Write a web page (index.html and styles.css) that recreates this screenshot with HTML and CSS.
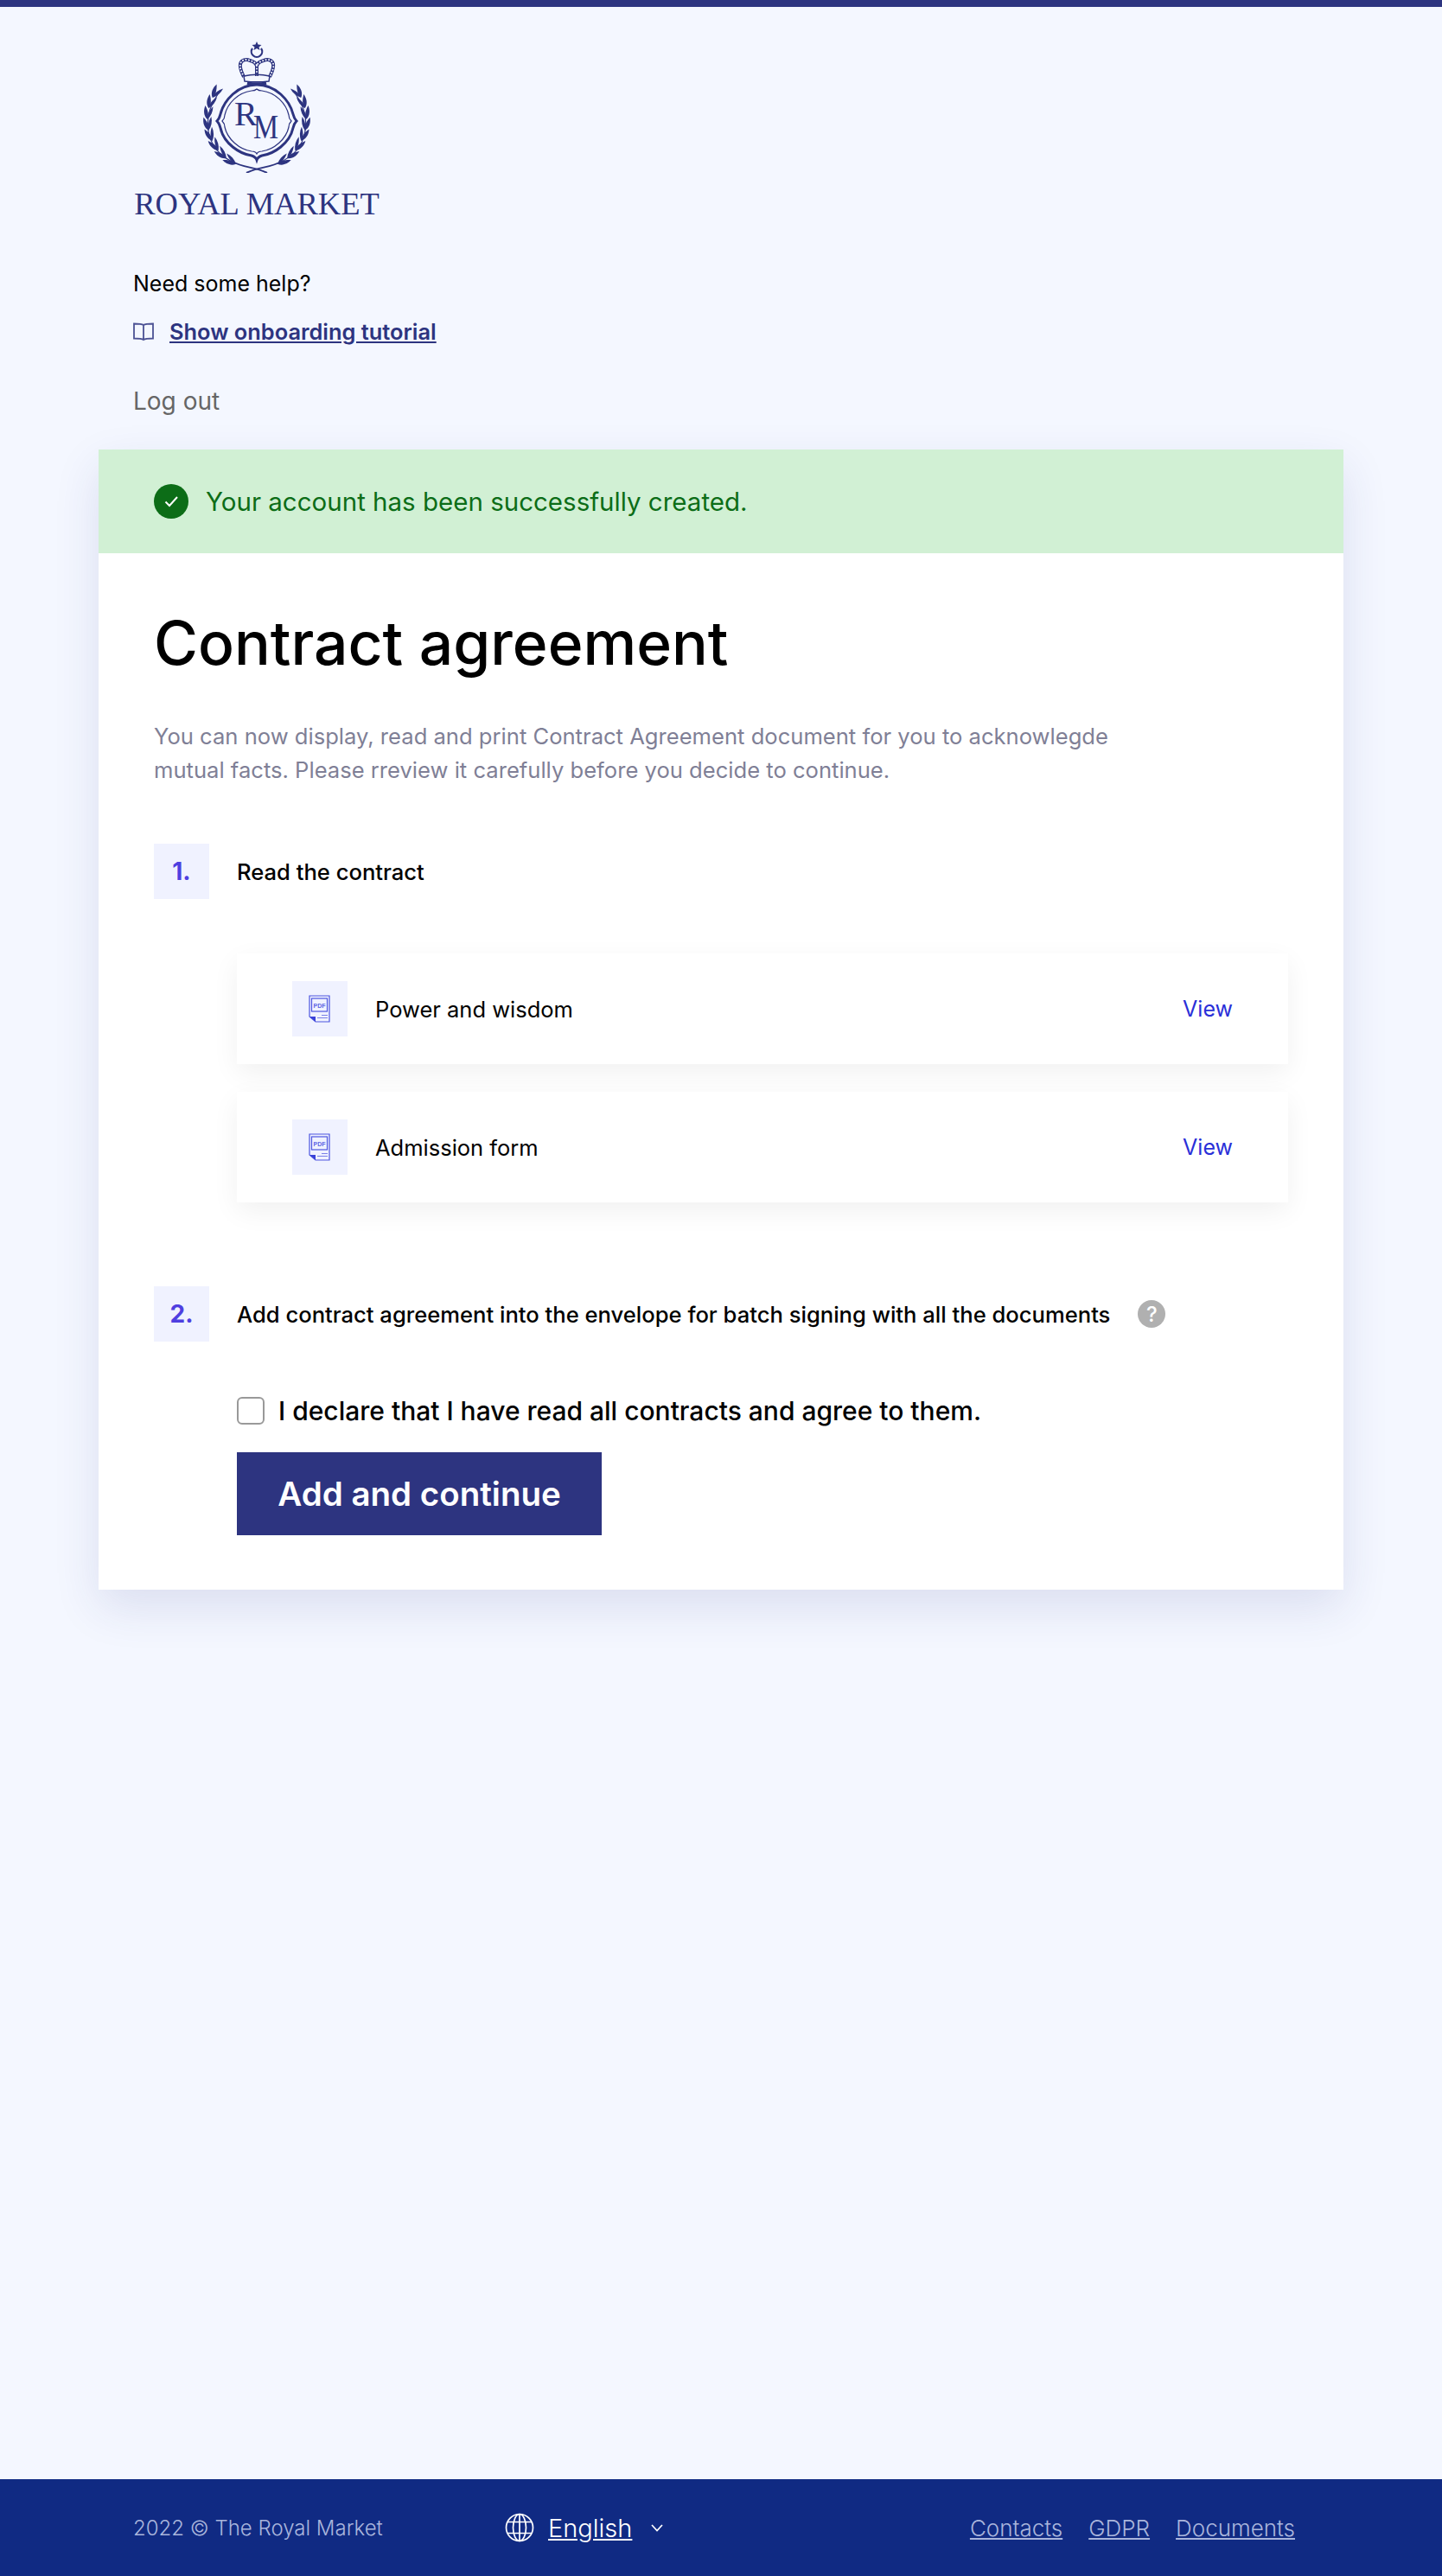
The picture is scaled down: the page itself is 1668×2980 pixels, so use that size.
FILE: index.html
```html
<!DOCTYPE html>
<html lang="en">
<head>
    <meta charset="UTF-8">
    <title>Contract agreement - The Royal Market</title>
    <link rel="stylesheet" href="styles.css">
</head>
<body>
    <div class="page">
        <header class="header">
            <div class="logo">
                <svg class="logo-mark" width="124" height="152" viewBox="0 0 124 152">
                    <defs>
                        <g id="leaf">
                            <path d="M5 92C0 88 0 81 2 76 5 81 7 87 5 92z"/>
                            <path d="M5 92C9 88 11 83 11 77 7 81 4 87 5 92z"/>
                        </g>
                        <g id="laurel">
                            <path class="line" stroke-width="1.200" d="M17 61C-2 88 1 125 36 140"/>
                            <g class="fill">
                                <use href="#leaf" transform="rotate(28 62 90)"/>
                                <use href="#leaf" transform="rotate(15 62 90)"/>
                                <use href="#leaf" transform="rotate(2 62 90)"/>
                                <use href="#leaf" transform="rotate(-11 62 90)"/>
                                <use href="#leaf" transform="rotate(-24 62 90)"/>
                                <use href="#leaf" transform="rotate(-37 62 90)"/>
                                <use href="#leaf" transform="rotate(-50 62 90)"/>
                                <use href="#leaf" transform="rotate(-63 62 90)"/>
                            </g>
                            <path class="line" stroke-width="2" d="M34 139C46 146 60 145 74 152"/>
                        </g>
                    </defs>
                    <!-- star and crescent -->
                    <polygon class="fill" points="62,0 63.500,3.500 67.500,4 64.500,6.500 65.500,10 62,8 58.500,10 59.500,6.500 56.500,4 60.500,3.500"/>
                    <path class="line" stroke-width="2.200" d="M57 8a6.200 6.200 0 1 0 10 0"/>
                    <!-- crown -->
                    <path class="arch" d="M47 41C44 34 42 31 43 26c1-5 7-6 11-4 4 1 7 3 8 6 1-3 4-5 8-6 4-2 10-1 11 4 1 5-1 8-4 15"/>
                    <path class="arch" d="M62 28v12"/>
                    <path class="arch-dots" d="M47 41C44 34 42 31 43 26c1-5 7-6 11-4 4 1 7 3 8 6 1-3 4-5 8-6 4-2 10-1 11 4 1 5-1 8-4 15"/>
                    <path class="arch-dots" d="M62 28v12"/>
                    <path class="line" stroke-width="1.500" d="M47 40c9-2 21-2 30 0l-1 6c-8 1-20 1-28 0z"/>
                    <path class="line" stroke-width="3.500" d="M51 48c6 1.500 16 1.500 22 0"/>
                    <!-- medallion -->
                    <path class="line" stroke-width="3" d="M62 50C84 50 100 68 104 84 105 88 106 90 108 92 106 94 105 96 104 100 100 118 82 130 68 132 65 133 63 134 62 137 61 134 59 133 56 132 42 130 24 118 20 100 19 96 18 94 16 92 18 90 19 88 20 84 24 68 40 50 62 50z"/>
                    <path class="line" stroke-width="1.200" d="M62 55C64 57 66 57 68 57 84 59 96 72 99 85 99 88 100 90 102 92 100 94 99 96 99 99 96 113 82 125 68 127 65 127 63 128 62 130 61 128 59 127 56 127 42 125 28 113 25 99 25 96 24 94 22 92 24 90 25 88 25 85 28 72 40 59 56 57 58 57 60 57 62 55z"/>
                    <text class="monogram" x="36" y="97" font-size="40">R</text>
                    <text class="monogram" x="58" y="112" font-size="40" textLength="29" lengthAdjust="spacingAndGlyphs">M</text>
                    <!-- laurel -->
                    <use href="#laurel"/>
                    <use href="#laurel" transform="matrix(-1 0 0 1 124 0)"/>
                </svg>
                <span class="logo-text">ROYAL MARKET</span>
            </div>
            <p class="help-title">Need some help?</p>
            <div class="help-link">
                <svg width="24" height="24" viewBox="0 0 24 24" fill="none" stroke="#4c5294" stroke-width="1.800">
                    <path d="M12 5C10 3.500 6 3.500 1 3.500v17c5 0 9 0 11 1.500 2-1.500 6-1.500 11-1.500v-17C18 3.500 14 3.500 12 5zv17"/>
                </svg>
                <a href="#">Show onboarding tutorial</a>
            </div>
            <a class="logout" href="#">Log out</a>
        </header>

        <main class="card">
            <div class="alert">
                <svg width="40" height="40" viewBox="0 0 40 40">
                    <circle cx="20" cy="20" r="20" fill="#0c6d17"/>
                    <path d="M13.500 20.500l4.500 4.500 9-10" fill="none" stroke="#fff" stroke-width="2"/>
                </svg>
                <span>Your account has been successfully created.</span>
            </div>
            <div class="card-body">
                <h1>Contract agreement</h1>
                <p class="intro">You can now display, read and print Contract Agreement document for you to acknowlegde mutual facts. Please rreview it carefully before you decide to continue.</p>

                <div class="step">
                    <span class="step-num">1.</span>
                    <span class="step-title">Read the contract</span>
                </div>
                <div class="doc-list">
                    <div class="doc">
                        <span class="doc-icon">
                            <svg width="26" height="32" viewBox="0 0 26 32">
                                <path d="M1 1h23v30H8l-7-6z" fill="none" stroke="#4d55e0" stroke-width="1.200"/>
                                <rect x="3.500" y="4" width="18" height="15" fill="none" stroke="#4d55e0" stroke-width="1.200"/>
                                <text class="pdf-text" x="12.500" y="14.500">PDF</text>
                                <path d="M1 25h7v6z" fill="#3a42d8"/>
                                <path d="M15 23.500h7M10 26.500h12" stroke="#7b81e8" stroke-width="1.200"/>
                            </svg>
                        </span>
                        <span class="doc-name">Power and wisdom</span>
                        <a class="doc-view" href="#">View</a>
                    </div>
                    <div class="doc">
                        <span class="doc-icon">
                            <svg width="26" height="32" viewBox="0 0 26 32">
                                <path d="M1 1h23v30H8l-7-6z" fill="none" stroke="#4d55e0" stroke-width="1.200"/>
                                <rect x="3.500" y="4" width="18" height="15" fill="none" stroke="#4d55e0" stroke-width="1.200"/>
                                <text class="pdf-text" x="12.500" y="14.500">PDF</text>
                                <path d="M1 25h7v6z" fill="#3a42d8"/>
                                <path d="M15 23.500h7M10 26.500h12" stroke="#7b81e8" stroke-width="1.200"/>
                            </svg>
                        </span>
                        <span class="doc-name">Admission form</span>
                        <a class="doc-view" href="#">View</a>
                    </div>
                </div>

                <div class="step">
                    <span class="step-num">2.</span>
                    <span class="step-title">Add contract agreement into the envelope for batch signing with all the documents</span>
                    <span class="hint">?</span>
                </div>
                <div class="agree">
                    <label class="agree-label">
                        <span class="checkbox"></span>
                        I declare that I have read all contracts and agree to them.
                    </label>
                    <button class="btn" type="button">Add and continue</button>
                </div>
            </div>
        </main>
    </div>

    <footer class="footer">
        <span class="copyright">2022 © The Royal Market</span>
        <div class="lang">
            <svg width="34" height="34" viewBox="0 0 34 34" fill="none" stroke="#fff" stroke-width="1.700">
                <circle cx="17" cy="17" r="15.500"/>
                <ellipse cx="17" cy="17" rx="7.500" ry="15.500"/>
                <path d="M17 1.500v31M3 10.500h28M3 23.500h28"/>
            </svg>
            <a href="#">English</a>
            <svg width="14" height="9" viewBox="0 0 14 9" fill="none" stroke="#fff" stroke-width="1.700">
                <path d="M1 1l6 6.500L13 1"/>
            </svg>
        </div>
        <nav class="footer-links">
            <a href="#">Contacts</a>
            <a href="#">GDPR</a>
            <a href="#">Documents</a>
        </nav>
    </footer>
</body>
</html>
```

FILE: styles.css
```css
* {
    box-sizing: border-box;
}
body {
    font-family: Inter, "Open Sans", sans-serif;
    background-color: #f4f7ff;
    color: #000;
    margin: 0;
    height: 2980px;
    display: flex;
    flex-direction: column;
    border-top: 8px solid #2d3480;
}
.page {
    flex: 1;
    padding: 0 114px;
}
.header {
    padding: 40px 0 0 40px;
    height: 512px;
}
.logo {
    display: flex;
    flex-direction: column;
    align-items: center;
    width: 286px;
}
.logo-mark {
    display: block;
}
.fill {
    fill: #2d3480;
}
.line {
    fill: none;
    stroke: #2d3480;
}
.arch {
    fill: none;
    stroke: #2d3480;
    stroke-width: 4;
}
.arch-dots {
    fill: none;
    stroke: #f4f7ff;
    stroke-width: 2;
    stroke-linecap: round;
    stroke-dasharray: 0.100 3.400;
}
.monogram {
    font-family: "Liberation Serif", serif;
    fill: #2d3480;
}
.logo-text {
    font-family: "Liberation Serif", serif;
    font-size: 36.500px;
    line-height: 36px;
    color: #2d3480;
    white-space: nowrap;
    margin-top: 18px;
}
.help-title {
    margin: 56px 0 0;
    font-size: 25px;
    line-height: 36px;
}
.help-link {
    display: flex;
    align-items: center;
    gap: 18px;
    margin-top: 19px;
    height: 36px;
}
.help-link a {
    color: #2d3480;
    font-size: 25.400px;
    font-weight: 600;
}
.logout {
    display: block;
    margin-top: 42px;
    font-size: 28px;
    line-height: 42px;
    color: #666;
    text-decoration: none;
}
.card {
    background: #fff;
    height: 1319px;
    box-shadow: 0 20px 50px rgba(45, 52, 128, 0.12);
}
.alert {
    display: flex;
    align-items: center;
    gap: 20px;
    height: 120px;
    padding: 0 64px;
    background: #d1f0d4;
    color: #0c6d17;
    font-size: 29.500px;
}
.card-body {
    padding: 64px;
}
h1 {
    margin: 0;
    font-size: 69.500px;
    line-height: 80px;
    font-weight: 500;
}
.intro {
    margin: 48px 0 0;
    max-width: 1130px;
    font-size: 25.600px;
    line-height: 39px;
    color: #7f7f96;
}
.step {
    display: flex;
    align-items: center;
    gap: 32px;
    margin-top: 66px;
}
.step-num {
    width: 64px;
    height: 64px;
    display: flex;
    align-items: center;
    justify-content: center;
    background: #f0f2ff;
    color: #4f3fe0;
    font-size: 28px;
    font-weight: 700;
}
.step-title {
    font-size: 25.600px;
    font-weight: 500;
}
.hint {
    width: 32px;
    height: 32px;
    border-radius: 50%;
    background: #b0b0b0;
    color: #fff;
    font-size: 24px;
    font-weight: 500;
    display: flex;
    align-items: center;
    justify-content: center;
}
.doc-list {
    margin: 63px 0 0 96px;
    display: flex;
    flex-direction: column;
    gap: 32px;
    padding-bottom: 31px;
}
.doc {
    display: flex;
    align-items: center;
    height: 128px;
    padding: 0 64px;
    background: #fff;
    box-shadow: 0 10px 30px rgba(0, 0, 0, 0.06);
}
.doc-icon {
    width: 64px;
    height: 64px;
    background: #f0f2ff;
    display: flex;
    align-items: center;
    justify-content: center;
    margin-right: 32px;
}
.pdf-text {
    font-family: "Liberation Sans", sans-serif;
    font-size: 7px;
    font-weight: 700;
    fill: #5d64e4;
    text-anchor: middle;
}
.doc-name {
    flex: 1;
    font-size: 25.500px;
}
.doc-view {
    color: #2a2fd8;
    font-size: 25px;
    text-decoration: none;
}
.agree {
    margin: 64px 0 0 96px;
}
.agree-label {
    display: flex;
    align-items: center;
    gap: 16px;
    font-size: 30px;
    font-weight: 500;
    height: 32px;
}
.checkbox {
    width: 32px;
    height: 32px;
    border: 2px solid #999;
    border-radius: 6px;
    background: #fff;
}
.btn {
    display: block;
    margin-top: 32px;
    width: 422px;
    height: 96px;
    border: 0;
    background: #2d3480;
    color: #fff;
    font-family: inherit;
    font-size: 38.500px;
    font-weight: 600;
}
.footer {
    height: 112px;
    display: flex;
    align-items: center;
    padding: 0 170px 0 154px;
    background: #102a83;
    color: #a9b5dc;
    font-size: 26px;
    font-weight: 300;
}
.copyright {
    width: 430px;
    font-size: 24px;
}
.footer a {
    color: inherit;
}
.lang {
    display: flex;
    align-items: center;
    gap: 16px;
    flex: 1;
    font-size: 29px;
    color: #fff;
}
.lang svg:last-child {
    margin-left: 6px;
}
.footer-links {
    display: flex;
    gap: 30px;
}
```
